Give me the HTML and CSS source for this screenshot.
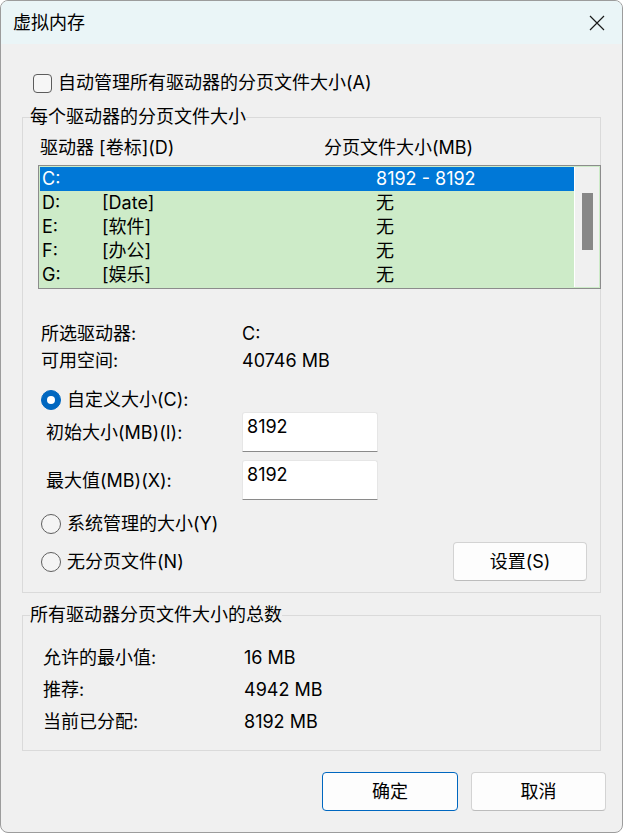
FILE: index.html
```html
<!DOCTYPE html>
<html lang="zh-CN">
<head>
<meta charset="utf-8">
<title>虚拟内存</title>
<link rel="stylesheet" href="styles.css">
</head>
<body>
<div class="window">
  <div class="titlebar">
    <span class="title">虚拟内存</span>
    <span class="close" aria-label="关闭">
      <svg width="16" height="16" viewBox="0 0 16 16"><path d="M1 1 L15 15 M15 1 L1 15" stroke="#1a1a1a" stroke-width="1.2" fill="none"/></svg>
    </span>
  </div>
  <div class="body">
    <div class="check-row"><span class="checkbox"></span><span>自动管理所有驱动器的分页文件大小(A)</span></div>

    <fieldset class="group g1">
      <legend>每个驱动器的分页文件大小</legend>
      <div class="list-head"><span class="head-drive">驱动器 [卷标](D)</span><span>分页文件大小(MB)</span></div>
      <div class="listbox">
        <div class="rows">
          <div class="row selected"><span class="c1">C:</span><span class="c2"></span><span class="c3">8192 - 8192</span></div>
          <div class="row"><span class="c1">D:</span><span class="c2">[Date]</span><span class="c3">无</span></div>
          <div class="row"><span class="c1">E:</span><span class="c2">[软件]</span><span class="c3">无</span></div>
          <div class="row"><span class="c1">F:</span><span class="c2">[办公]</span><span class="c3">无</span></div>
          <div class="row"><span class="c1">G:</span><span class="c2">[娱乐]</span><span class="c3">无</span></div>
        </div>
        <div class="scrollbar"><div class="thumb"></div></div>
      </div>

      <div class="info">
        <div class="info-row"><span class="info-label">所选驱动器:</span><span>C:</span></div>
        <div class="info-row"><span class="info-label">可用空间:</span><span>40746 MB</span></div>
      </div>

      <div class="radio-row r-custom"><span class="radio on"></span><span>自定义大小(C):</span></div>
      <div class="field-row f-first"><span class="field-label">初始大小(MB)(I):</span><div class="textbox">8192</div></div>
      <div class="field-row f-second"><span class="field-label">最大值(MB)(X):</span><div class="textbox">8192</div></div>
      <div class="radio-row r-sys"><span class="radio"></span><span>系统管理的大小(Y)</span></div>
      <div class="radio-row r-none">
        <span class="radio"></span><span>无分页文件(N)</span>
        <span class="btn btn-set">设置(S)</span>
      </div>
    </fieldset>

    <fieldset class="group g2">
      <legend>所有驱动器分页文件大小的总数</legend>
      <div class="totals">
        <div class="total-row"><span class="total-label">允许的最小值:</span><span>16 MB</span></div>
        <div class="total-row"><span class="total-label">推荐:</span><span>4942 MB</span></div>
        <div class="total-row"><span class="total-label">当前已分配:</span><span>8192 MB</span></div>
      </div>
    </fieldset>

    <div class="buttons">
      <span class="btn btn-default">确定</span>
      <span class="btn">取消</span>
    </div>
  </div>
</div>
</body>
</html>
```

FILE: styles.css
```css
html, body {
  margin: 0;
  padding: 0;
  background: #ffffff;
}

body {
  font-family: "Inter", "Noto Sans CJK SC", sans-serif;
  font-size: 18px;
  color: #000;
}

.window {
  width: 623px;
  height: 833px;
  box-sizing: border-box;
  border: 1px solid #9c9c9c;
  border-radius: 8px;
  background: #f0f0f0;
  overflow: hidden;
}

.titlebar {
  height: 43px;
  background: #eaf5f7;
  display: flex;
  align-items: center;
  justify-content: space-between;
  padding: 0 17px 0 12px;
}

.title {
  line-height: 24px;
}

.close {
  display: flex;
  width: 16px;
  height: 16px;
}

.body {
  padding: 0 16px 0 21px;
  display: flex;
  flex-direction: column;
}

.check-row {
  margin-top: 29px;
  height: 20px;
  line-height: 20px;
  display: flex;
  align-items: center;
  padding-left: 11px;
  gap: 6px;
}

.checkbox {
  width: 17px;
  height: 17px;
  border: 1px solid #5c5c5c;
  border-radius: 4px;
  background: #f6f6f6;
  flex: none;
}

.group {
  margin: 0 5px 0 0;
  padding: 0;
  border: 1px solid #dadada;
  min-width: 0;
}

.group legend {
  padding: 0;
  margin-left: 7px;
  line-height: 24px;
}

.g1 {
  margin-top: 12px;
  padding-bottom: 11px;
}

.list-head {
  margin-top: 7px;
  padding-left: 17px;
  line-height: 24px;
  display: flex;
}

.head-drive {
  width: 284px;
}

.listbox {
  margin-top: 5px;
  margin-left: 15px;
  width: 563px;
  box-sizing: border-box;
  border: 1px solid #8c8c8c;
  padding: 1px;
  background: #cdebc8;
  display: flex;
}

.rows {
  width: 534px;
}

.row {
  height: 24px;
  line-height: 24px;
  display: flex;
  white-space: nowrap;
}

.row.selected {
  background: #0078d7;
  color: #fff;
}

.c1 {
  width: 60px;
  padding-left: 2px;
}

.c2 {
  width: 274px;
}

.scrollbar {
  flex: 1;
  border-left: 1px solid #ffffff;
  background: #f0f0f0;
  padding: 26px 0 0 7px;
}

.thumb {
  width: 11px;
  height: 57px;
  background: #878787;
}

.info {
  margin-top: 31px;
  padding-left: 18px;
}

.info-row {
  line-height: 27px;
  display: flex;
}

.info-label {
  width: 201px;
}

.radio-row {
  display: flex;
  align-items: center;
  padding-left: 18px;
  gap: 6px;
  line-height: 24px;
}

.r-custom {
  margin-top: 14px;
  height: 24px;
}

.r-sys {
  margin-top: 12px;
  height: 24px;
}

.r-none {
  margin-top: 6px;
  height: 39px;
  padding-right: 13px;
}

.radio {
  width: 18px;
  height: 18px;
  border: 1px solid #5f5f5f;
  border-radius: 50%;
  background: #f4f4f4;
  flex: none;
  display: flex;
  align-items: center;
  justify-content: center;
}

.radio.on {
  border-color: #0067c0;
  background: #0067c0;
}

.radio.on::after {
  content: "";
  width: 8px;
  height: 8px;
  border-radius: 50%;
  background: #ffffff;
}

.field-row {
  display: flex;
  align-items: center;
  height: 40px;
  padding-left: 23px;
}

.f-second {
  margin-top: 8px;
}

.field-label {
  width: 196px;
  line-height: 24px;
  padding-top: 2px;
}

.textbox {
  width: 136px;
  height: 40px;
  box-sizing: border-box;
  background: #ffffff;
  border: 1px solid #e6e6e6;
  border-bottom: 1px solid #8a8a8a;
  border-radius: 3px 3px 0 0;
  padding: 2px 0 0 4px;
  line-height: 24px;
}

.btn {
  display: flex;
  align-items: center;
  justify-content: center;
  box-sizing: border-box;
  height: 39px;
  background: #fdfdfd;
  border: 1px solid #d3d3d3;
  border-bottom-color: #bcbcbc;
  border-radius: 4px;
  line-height: 24px;
}

.btn-set {
  margin-left: auto;
  width: 134px;
}

.g2 {
  margin-top: 10px;
  padding-bottom: 12px;
}

.totals {
  margin-top: 15px;
  padding-left: 20px;
}

.total-row {
  display: flex;
  line-height: 32px;
}

.total-label {
  width: 201px;
}

.buttons {
  margin-top: 21px;
  display: flex;
  justify-content: flex-end;
  gap: 13px;
}

.buttons .btn {
  width: 135px;
}

.buttons .btn-default {
  width: 136px;
  border: 1px solid #0067c0;
}
```
